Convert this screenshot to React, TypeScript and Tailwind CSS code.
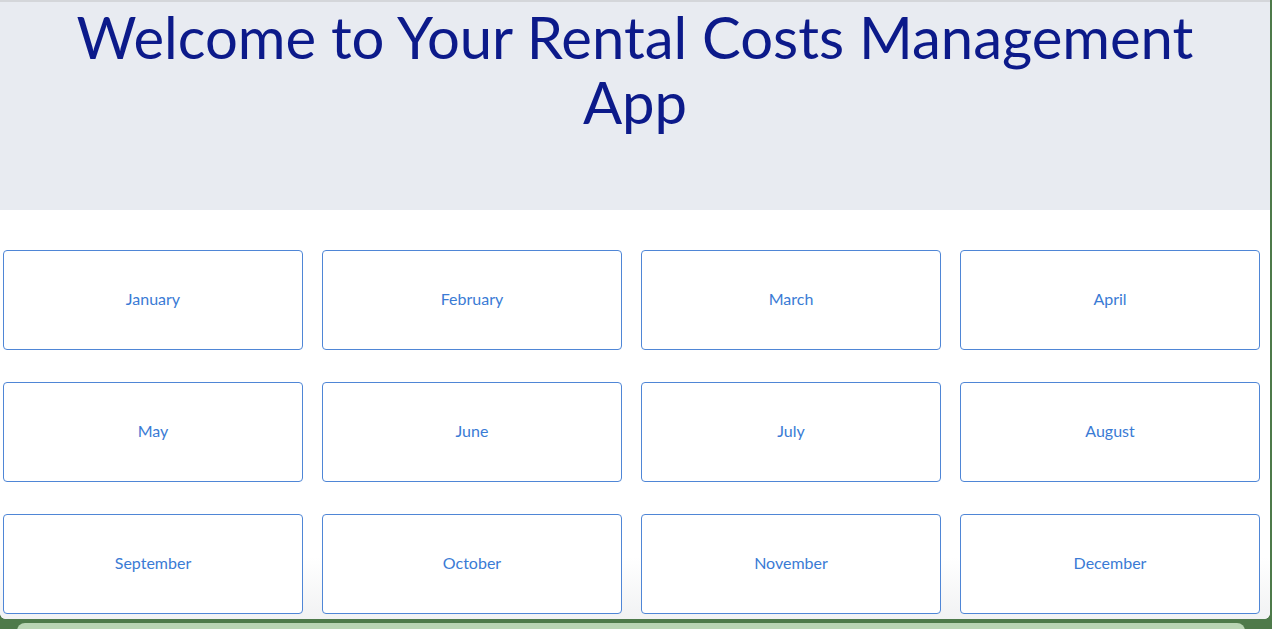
const MONTHS = [
  "January",
  "February",
  "March",
  "April",
  "May",
  "June",
  "July",
  "August",
  "September",
  "October",
  "November",
  "December",
];

function MonthCard({ name }: { name: string }) {
  return (
    <button className="flex h-[100px] items-center justify-center rounded-[4px] border border-[#4f86d6] bg-white pb-[2px] text-[16px] text-[#3a7bd5]">
      {name}
    </button>
  );
}

export default function App() {
  return (
    <div className="flex h-[629px] w-[1272px] flex-col overflow-hidden bg-[#4e7a4a] font-['Lato','Noto_Sans',sans-serif]">
      <div className="flex h-[619px] w-[1270px] shrink-0 flex-col overflow-hidden rounded-b-[6px] border-t-2 border-[#d4d6da] bg-white">
        <header className="flex h-[208px] shrink-0 justify-center bg-[#e8ebf1] pt-[2px]">
          <h1 className="w-[1200px] text-center text-[58px] leading-[65px] text-[#0c1a8a]">
            Welcome to Your Rental Costs Management App
          </h1>
        </header>
        <main className="grid flex-1 grid-cols-4 content-start gap-x-[19px] gap-y-[32px] bg-gradient-to-b from-white from-85% to-[#f1f2f3] pt-[40px] pr-[10px] pl-[3px]">
          {MONTHS.map((m) => (
            <MonthCard key={m} name={m} />
          ))}
        </main>
      </div>
      <div className="mx-[17px] mt-[4px] h-[10px] w-[1228px] shrink-0 rounded-t-[8px] bg-[#b9d4b4]" />
    </div>
  );
}
